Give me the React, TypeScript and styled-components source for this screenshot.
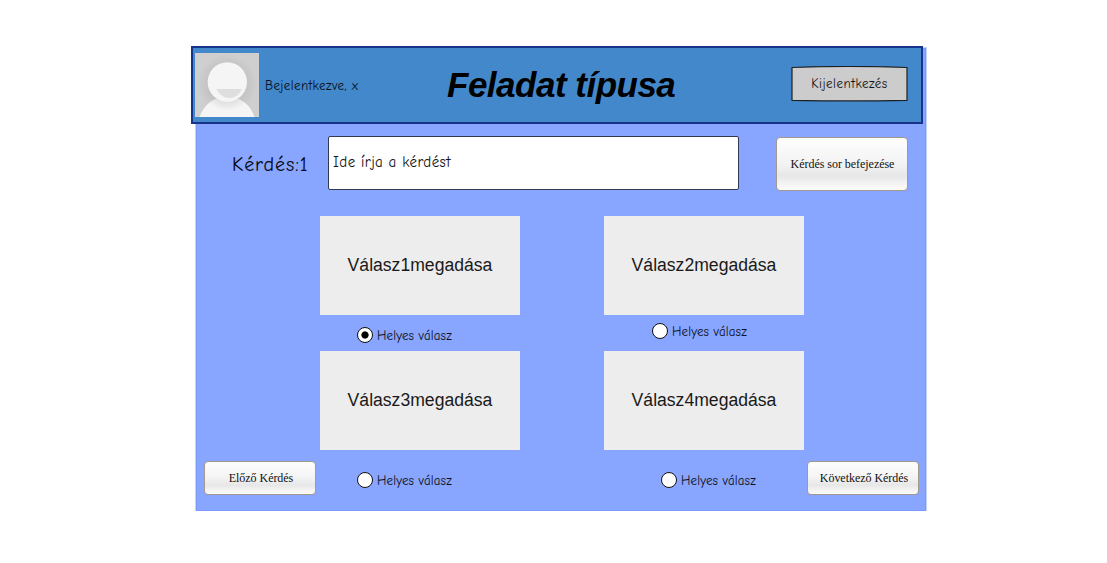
import React, { useState } from "react";
import styled, { createGlobalStyle } from "styled-components";

const GlobalStyle = createGlobalStyle`
  * { box-sizing: border-box; }
  body { margin: 0; background: #fff; }
  button { font: inherit; padding: 0; margin: 0; }
`;

const comic = `"Comic Sans MS", "Comic Neue", Lato, sans-serif`;

const Page = styled.main`
  display: flex;
  padding: 48px 0 0 196px;
`;

const Panel = styled.section`
  display: flex;
  flex-direction: column;
  width: 730px;
  height: 463px;
  background: #88a5ff;
  border: 1px solid #7a9afc;
  box-shadow: 0 0 0 1px #c3d2ff;
`;

const Header = styled.header`
  display: flex;
  align-items: center;
  flex: none;
  width: 732px;
  height: 78px;
  margin: -3px 0 0 -6px;
  padding-left: 2px;
  background: #4488cc;
  border: 2px solid #18338a;
`;

const Avatar = styled.svg`
  flex: none;
  width: 64px;
  height: 64px;
`;

const SignedIn = styled.span`
  width: 188px;
  padding: 2px 0 0 6px;
  font: 13px/20px ${comic};
  letter-spacing: 0.4px;
  color: #06101a;
  white-space: pre;
`;

const Title = styled.h1`
  width: 344px;
  margin: 0;
  font: italic bold 35px/42px "Liberation Sans", Arial, sans-serif;
  letter-spacing: -0.5px;
  color: #000;
  white-space: nowrap;
`;

const LogoutButton = styled.button`
  display: grid;
  width: 117px;
  height: 36px;
  margin-bottom: 2px;
  background: none;
  border: 0;
  place-items: center;
  font: 13px/20px ${comic};
  letter-spacing: 0.5px;
  color: #111;

  & > * { grid-area: 1 / 1; }
`;

const QuestionRow = styled.div`
  display: flex;
  align-items: flex-start;
  height: 92px;
  padding: 12px 0 0 35px;
`;

const QuestionLabel = styled.label`
  width: 96px;
  padding-top: 15px;
  font: 20px/28px ${comic};
  letter-spacing: 0.95px;
  color: #05070d;
`;

const QuestionInput = styled.input`
  width: 411px;
  height: 54px;
  padding: 0 4px 2px;
  background: #fff;
  border: 1.5px solid #333a50;
  border-radius: 2px;
  outline: 0;
  font: 15px/20px ${comic};
  letter-spacing: 0.4px;
  color: #111;

  &::placeholder { color: #111; opacity: 1; }
`;

const GlossButton = styled.button<{ $w: number; $h: number }>`
  width: ${(p) => p.$w}px;
  height: ${(p) => p.$h}px;
  background: linear-gradient(#fefefe 0%, #f3f3f3 50%, #e7e7e7 72%, #fcfcfc 100%);
  border: 1px solid #a39a8e;
  border-radius: 4px;
  font: 12px/16px "Liberation Serif", "Times New Roman", serif;
  letter-spacing: -0.04px;
  color: #111;
  white-space: nowrap;
`;

const FinishButton = styled(GlossButton)`
  margin: 1px 0 0 37px;
  padding-left: 1px;
`;

const AnswerRow = styled.div`
  display: flex;
  gap: 84px;
  padding-left: 123px;
`;

const AnswerCard = styled.div`
  display: flex;
  align-items: center;
  justify-content: center;
  width: 200px;
  height: 99px;
  padding-bottom: 2px;
  background: #ededed;
  font: 17.6px/20px "Liberation Sans", Arial, sans-serif;
  color: #1a1a1a;
`;

const ChoiceRow = styled.div`
  display: flex;
  height: 36px;
  padding-left: 160px;
`;

const FooterRow = styled.div`
  display: flex;
  padding: 11px 0 0 7px;
`;

const Choice = styled.label<{ $w?: number; $top: number }>`
  display: flex;
  align-items: center;
  gap: 4px;
  width: ${(p) => (p.$w ? `${p.$w}px` : "auto")};
  height: 20px;
  margin-top: ${(p) => p.$top}px;
  font: 13px/20px ${comic};
  letter-spacing: 0.14px;
  color: #0c1020;
  white-space: nowrap;

  & > span { padding-top: 1px; }
`;

const Radio = styled.input`
  appearance: none;
  flex: none;
  width: 16px;
  height: 16px;
  margin: 0;
  border: 1px solid #111;
  border-radius: 50%;
  background: #fff;

  &:checked { background: radial-gradient(circle, #000 3.2px, #fff 4px); }
`;

const PreviousButton = styled(GlossButton)`
  margin-right: 41px;
  padding-left: 2px;
`;

const NextButton = styled(GlossButton)`
  padding-left: 2px;
`;

function Portrait() {
  return (
    <Avatar viewBox="0 0 64 64">
      <defs>
        <radialGradient id="backdrop">
          <stop offset="0.6" stopColor="#c2c2c2" />
          <stop offset="1" stopColor="#cfcfcf" />
        </radialGradient>
        <radialGradient id="neck" cx="0.5" cy="0.5" r="0.5">
          <stop offset="0.7" stopColor="#e2e2e2" />
          <stop offset="1" stopColor="#f5f5f5" />
        </radialGradient>
        <clipPath id="shoulders">
          <path d="M4.500 64C9 51 19 44 32 44S55.500 51 59.500 64Z" />
        </clipPath>
      </defs>
      <rect width="64" height="64" fill="#cfcfcf" />
      <circle cx="32" cy="31" r="30" fill="url(#backdrop)" />
      <path d="M4.500 64C9 51 19 44 32 44S55.500 51 59.500 64Z" fill="#f5f5f5" />
      <circle cx="32" cy="31" r="27" fill="url(#neck)" clipPath="url(#shoulders)" />
      <circle cx="32.300" cy="29" r="19.700" fill="#f5f5f5" />
      <path d="M21.500 36H47C44 42 40 45 34.500 45S24.500 42 21.500 36Z" fill="#dedede" />
    </Avatar>
  );
}

function HelyesValasz(props: { id: number; selected: number; onSelect: (n: number) => void; top: number; width?: number }) {
  return (
    <Choice $top={props.top} $w={props.width}>
      <Radio type="radio" name="helyes" checked={props.selected === props.id} onChange={() => props.onSelect(props.id)} />
      <span>Helyes válasz</span>
    </Choice>
  );
}

export default function App() {
  const [selected, setSelected] = useState(1);
  return (
    <>
      <GlobalStyle />
      <Page>
        <Panel>
          <Header>
            <Portrait />
            <SignedIn>Bejelentkezve, x</SignedIn>
            <Title>Feladat típusa</Title>
            <LogoutButton>
              <svg width="117" height="36" viewBox="0 0 117 36">
                <path
                  d="M1 1.500Q58 -0.500 116 1.500V34.300Q58 35.600 1 34.300Z"
                  fill="#cccccc"
                  stroke="#1c1f22"
                  strokeWidth="1.200"
                  strokeLinejoin="round"
                />
              </svg>
              <span>Kijelentkezés</span>
            </LogoutButton>
          </Header>
          <QuestionRow>
            <QuestionLabel htmlFor="kerdes">Kérdés:1</QuestionLabel>
            <QuestionInput id="kerdes" placeholder="Ide írja a kérdést" />
            <FinishButton $w={132} $h={54}>Kérdés sor befejezése</FinishButton>
          </QuestionRow>
          <AnswerRow>
            <AnswerCard>Válasz1megadása</AnswerCard>
            <AnswerCard>Válasz2megadása</AnswerCard>
          </AnswerRow>
          <ChoiceRow>
            <HelyesValasz id={1} selected={selected} onSelect={setSelected} top={10} width={295} />
            <HelyesValasz id={2} selected={selected} onSelect={setSelected} top={6} />
          </ChoiceRow>
          <AnswerRow>
            <AnswerCard>Válasz3megadása</AnswerCard>
            <AnswerCard>Válasz4megadása</AnswerCard>
          </AnswerRow>
          <FooterRow>
            <PreviousButton $w={112} $h={34}>Előző Kérdés</PreviousButton>
            <HelyesValasz id={3} selected={selected} onSelect={setSelected} top={9} width={304} />
            <HelyesValasz id={4} selected={selected} onSelect={setSelected} top={9} width={146} />
            <NextButton $w={112} $h={34}>Következő Kérdés</NextButton>
          </FooterRow>
        </Panel>
      </Page>
    </>
  );
}
